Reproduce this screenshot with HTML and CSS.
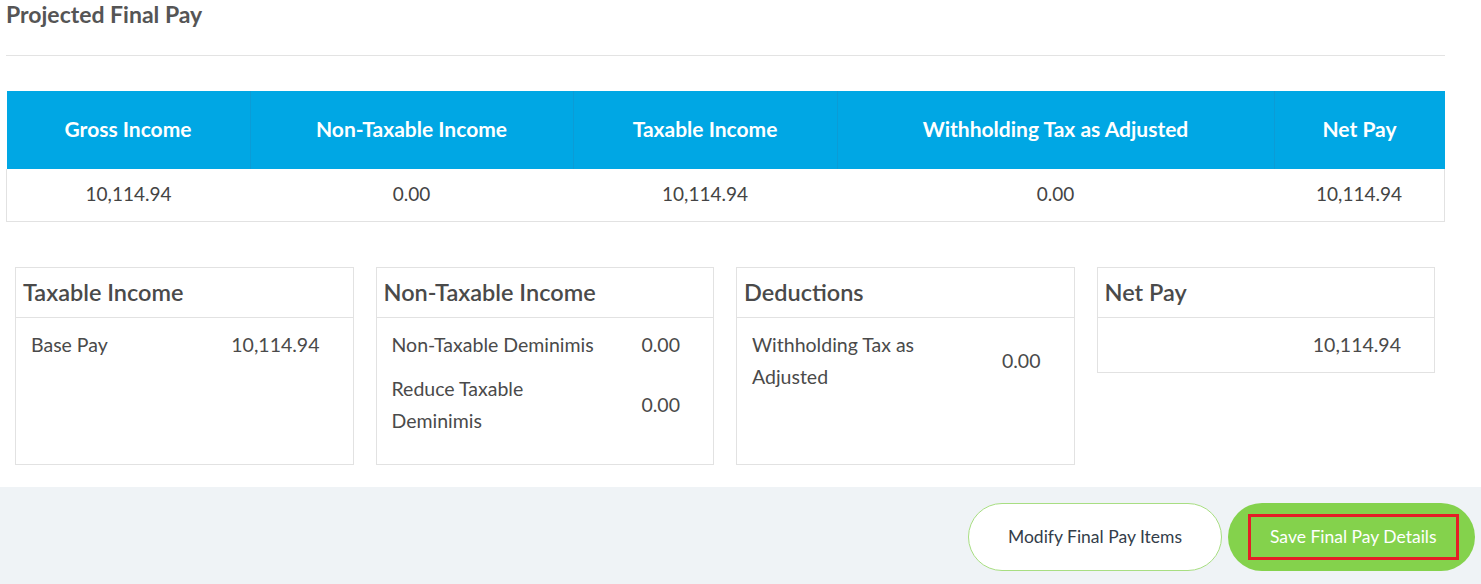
FILE: index.html
```html
<html>
  <head>
    <link rel="stylesheet" href="styles.css">
  </head>
  <body>

    <div class="page">
      <h2 class="page-title">Projected Final Pay</h2>
      <div class="divider"></div>

      <table class="summary">
        <thead>
          <tr>
            <th class="col-gross">Gross Income</th>
            <th class="col-nontax">Non-Taxable Income</th>
            <th class="col-tax">Taxable Income</th>
            <th class="col-wtax">Withholding Tax as Adjusted</th>
            <th class="col-net">Net Pay</th>
          </tr>
        </thead>
        <tbody>
          <tr>
            <td>10,114.94</td>
            <td>0.00</td>
            <td>10,114.94</td>
            <td>0.00</td>
            <td>10,114.94</td>
          </tr>
        </tbody>
      </table>

      <div class="cards">
        <div class="card">
          <div class="card-title">Taxable Income</div>
          <div class="card-body tall">
            <div class="item">
              <div class="item-label">Base Pay</div>
              <div class="item-value">10,114.94</div>
            </div>
          </div>
        </div>

        <div class="card">
          <div class="card-title">Non-Taxable Income</div>
          <div class="card-body tall">
            <div class="item">
              <div class="item-label">Non-Taxable Deminimis</div>
              <div class="item-value">0.00</div>
            </div>
            <div class="item">
              <div class="item-label">Reduce Taxable Deminimis</div>
              <div class="item-value">0.00</div>
            </div>
          </div>
        </div>

        <div class="card">
          <div class="card-title">Deductions</div>
          <div class="card-body tall">
            <div class="item">
              <div class="item-label narrow">Withholding Tax as Adjusted</div>
              <div class="item-value">0.00</div>
            </div>
          </div>
        </div>

        <div class="card">
          <div class="card-title">Net Pay</div>
          <div class="card-body">
            <div class="item">
              <div class="item-label"></div>
              <div class="item-value">10,114.94</div>
            </div>
          </div>
        </div>
      </div>
    </div>

    <div class="footer">
      <div class="btn btn-outline">Modify Final Pay Items</div>
      <div class="btn btn-save"><span class="btn-mark">Save Final Pay Details</span></div>
    </div>

  </body>
</html>
```

FILE: styles.css
```css
body {
  font-family: "Source Sans Pro", Lato, "Liberation Sans", sans-serif;
  -webkit-font-smoothing: antialiased;
  margin: 0;
  color: #444444;
  background: #FFFFFF;
}

.page {
  padding: 0 36px 22px 6px;
}

.page-title {
  margin: 0;
  height: 30px;
  line-height: 28px;
  font-size: 23px;
  font-weight: 700;
  color: #555555;
}

.divider {
  margin-top: 25px;
  border-top: 1px solid #E3E3E3;
}

.summary {
  width: 100%;
  margin-top: 35px;
  border-collapse: collapse;
  table-layout: fixed;
}

.summary th {
  height: 78px;
  padding: 0 0 4px 0;
  background-color: #00A7E4;
  color: #FFFFFF;
  font-size: 21px;
  font-weight: 700;
  border-left: 1px solid #0B9CD6;
}

.summary th:first-child {
  border-left: none;
}

.col-gross { width: 243px; }
.col-nontax { width: 322px; }
.col-tax { width: 263px; }
.col-wtax { width: 436px; }

.summary td {
  height: 52px;
  padding: 0 0 2px 0;
  text-align: center;
  font-size: 19px;
  color: #444444;
  border-bottom: 1px solid #E2E2E2;
}

.summary td:first-child {
  border-left: 1px solid #E2E2E2;
}

.summary td:last-child {
  border-right: 1px solid #E2E2E2;
}

.cards {
  display: flex;
  align-items: flex-start;
  gap: 22px;
  margin-top: 45px;
  padding: 0 10px 0 9px;
}

.card {
  flex: 1 1 0;
  min-width: 0;
  border: 1px solid #E2E2E2;
  background: #FFFFFF;
}

.card-title {
  height: 49px;
  line-height: 49px;
  padding-left: 7px;
  font-size: 23.5px;
  font-weight: 600;
  color: #4A4A4A;
  border-bottom: 1px solid #E2E2E2;
}

.card-body {
  padding: 5px 33px 5px 15px;
}

.card-body.tall {
  min-height: 136px;
}

.item {
  display: flex;
  align-items: center;
  justify-content: space-between;
  padding: 6px 0;
  font-size: 19.5px;
  line-height: 32px;
  color: #4A4A4A;
}

.item-label {
  width: 208px;
}

.item-label.narrow {
  width: 175px;
}

.item-value {
  text-align: right;
}

.footer {
  display: flex;
  justify-content: flex-end;
  gap: 6px;
  height: 82px;
  padding: 16px 6px 0 0;
  background-color: #EFF3F6;
}

.btn {
  display: flex;
  align-items: center;
  justify-content: center;
  height: 68px;
  border-radius: 34px;
  box-sizing: border-box;
  font-size: 17.5px;
}

.btn-outline {
  width: 254px;
  background: #FFFFFF;
  border: 1px solid #A8DE82;
  color: #333D4A;
}

.btn-save {
  width: 247px;
  justify-content: flex-start;
  padding-left: 20px;
  background: #84D24C;
  color: #FFFFFF;
}

.btn-mark {
  height: 40px;
  line-height: 40px;
  padding: 0 19px;
  border: 3px solid #E41E26;
}
```
